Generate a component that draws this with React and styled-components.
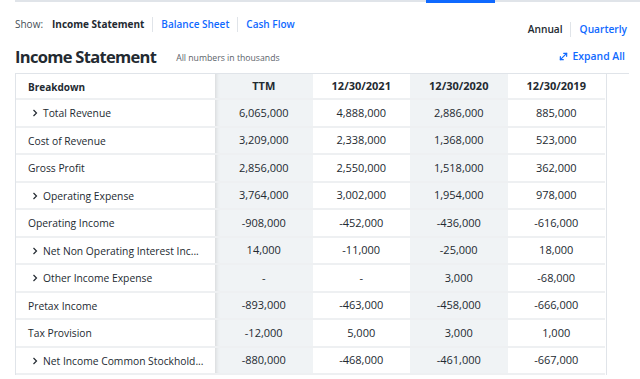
import React from "react";
import styled, { createGlobalStyle } from "styled-components";

const Global = createGlobalStyle`
  html, body { margin: 0; padding: 0; background: #fff; }
  body { font-family: "Open Sans", "Noto Sans", sans-serif; color: #232a31; }
`;

const Page = styled.div`
  width: 640px;
  height: 379px;
  overflow: hidden;
  padding-left: 15px;
  box-sizing: border-box;
`;

const TabBar = styled.div`
  display: flex;
  height: 3px;
  border-top: 2px solid #e0e4e9;
  box-sizing: border-box;
`;

const TabSpacer = styled.div`
  width: 411px;
`;

const ActiveTab = styled.div`
  width: 69px;
  height: 3px;
  margin-top: -2px;
  background: #0f69ff;
`;

const TopRow = styled.div`
  display: flex;
  justify-content: space-between;
  align-items: flex-start;
  padding-right: 13px;
  margin-top: 13px;
`;

const ShowGroup = styled.div`
  display: flex;
  align-items: center;
  font-size: 10px;
  height: 16px;
`;

const ShowLabel = styled.span`
  color: #464e56;
  margin-right: 9px;
`;

const Link = styled.span`
  color: ${(p) => (p.$active ? "#232a31" : "#0f69ff")};
  font-weight: ${(p) => p.$weight || (p.$active ? 700 : 600)};
  white-space: nowrap;
`;

const Sep = styled.span`
  display: inline-block;
  width: 1px;
  height: 15px;
  background: #e0e4e9;
  margin: 0 ${(p) => p.$right || 8}px 0 ${(p) => p.$left || 8}px;
`;

const PeriodGroup = styled(ShowGroup)`
  margin-top: 5px;
  font-size: 10.2px;
`;

const HeadRow = styled.div`
  display: flex;
  align-items: center;
  margin-top: 8px;
  padding-right: 15px;
  height: 22px;
`;

const Title = styled.h1`
  margin: 0;
  font-size: 16.5px;
  font-weight: 700;
  letter-spacing: -0.7px;
  color: #232a31;
`;

const Note = styled.span`
  font-size: 8.7px;
  color: #5b636a;
  margin-left: 20px;
  margin-top: 4px;
`;

const Expand = styled.span`
  margin-left: auto;
  display: flex;
  align-items: center;
  gap: 5px;
  color: #0f69ff;
  font-size: 10.4px;
  font-weight: 600;
`;

const TableWrap = styled.div`
  margin-top: 6px;
  width: 614px;
  border-top: 1px solid #e0e4e9;
  border-left: 1px solid #e0e4e9;
  box-sizing: border-box;
`;

const Table = styled.div`
  width: 590px;
  border-right: 1px solid #e0e4e9;
`;

const Row = styled.div`
  display: grid;
  grid-template-columns: 199px repeat(4, 97.5px);
  height: ${(p) => (p.$head ? "26px" : "27.5px")};
`;

const Cell = styled.div`
  display: flex;
  align-items: center;
  justify-content: ${(p) => (p.$label ? "flex-start" : "center")};
  padding-left: ${(p) => (p.$label ? (p.$expand ? "16px" : "12px") : "0")};
  padding-top: ${(p) => (p.$label ? "1px" : "0")};
  font-size: ${(p) => (p.$label ? (p.$head ? "10px" : "10.3px") : "11px")};
  line-height: 16px;
  font-weight: ${(p) => (p.$head ? 700 : 400)};
  color: #232a31;
  background: ${(p) => (p.$shade ? "#f0f3f5" : "#fff")};
  border-bottom: 2px solid #eef0f2;
  box-shadow: ${(p) => (p.$edge ? "inset 5px 0 4px -4px rgba(0,0,0,0.12)" : "none")};
  white-space: nowrap;
  overflow: hidden;
  box-sizing: border-box;
`;

const Chevron = styled.span`
  display: inline-flex;
  margin-right: 5px;
`;

const ExpandIcon = () => (
  <svg width="9" height="9" viewBox="0 0 10 10" fill="none" stroke="#0f69ff" strokeWidth="1.3" strokeLinecap="round">
    <path d="M1.5 8.5 L8.5 1.5" />
    <path d="M5.2 1.5 H8.5 V4.8" />
    <path d="M1.5 5.2 V8.5 H4.8" />
  </svg>
);

const ChevronIcon = () => (
  <svg width="6" height="8" viewBox="0 0 6 8" fill="none" stroke="#232a31" strokeWidth="1.2">
    <path d="M1.5 1 L4.5 4 L1.5 7" />
  </svg>
);

const cols = ["TTM", "12/30/2021", "12/30/2020", "12/30/2019"];

const rows = [
  ["Total Revenue", true, ["6,065,000", "4,888,000", "2,886,000", "885,000"]],
  ["Cost of Revenue", false, ["3,209,000", "2,338,000", "1,368,000", "523,000"]],
  ["Gross Profit", false, ["2,856,000", "2,550,000", "1,518,000", "362,000"]],
  ["Operating Expense", true, ["3,764,000", "3,002,000", "1,954,000", "978,000"]],
  ["Operating Income", false, ["-908,000", "-452,000", "-436,000", "-616,000"]],
  ["Net Non Operating Interest Inc...", true, ["14,000", "-11,000", "-25,000", "18,000"]],
  ["Other Income Expense", true, ["-", "-", "3,000", "-68,000"]],
  ["Pretax Income", false, ["-893,000", "-463,000", "-458,000", "-666,000"]],
  ["Tax Provision", false, ["-12,000", "5,000", "3,000", "1,000"]],
  ["Net Income Common Stockhold...", true, ["-880,000", "-468,000", "-461,000", "-667,000"]],
];

export default function App() {
  return (
    <Page>
      <Global />
      <TabBar>
        <TabSpacer />
        <ActiveTab />
      </TabBar>
      <TopRow>
        <ShowGroup>
          <ShowLabel>Show:</ShowLabel>
          <Link $active>Income Statement</Link>
          <Sep />
          <Link>Balance Sheet</Link>
          <Sep />
          <Link>Cash Flow</Link>
        </ShowGroup>
        <PeriodGroup>
          <Link $active $weight={600}>Annual</Link>
          <Sep $left={7} $right={9} />
          <Link>Quarterly</Link>
        </PeriodGroup>
      </TopRow>
      <HeadRow>
        <Title>Income Statement</Title>
        <Note>All numbers in thousands</Note>
        <Expand>
          <ExpandIcon />
          Expand All
        </Expand>
      </HeadRow>
      <TableWrap>
        <Table>
          <Row $head>
            <Cell $label $head>Breakdown</Cell>
            {cols.map((c, i) => (
              <Cell key={c} $head $shade={i % 2 === 0} $edge={i === 0}>{c}</Cell>
            ))}
          </Row>
          {rows.map(([label, exp, vals]) => (
            <Row key={label}>
              <Cell $label $expand={exp}>
                {exp && (
                  <Chevron>
                    <ChevronIcon />
                  </Chevron>
                )}
                {label}
              </Cell>
              {vals.map((v, i) => (
                <Cell key={i} $shade={i % 2 === 0} $edge={i === 0}>{v}</Cell>
              ))}
            </Row>
          ))}
        </Table>
      </TableWrap>
    </Page>
  );
}
